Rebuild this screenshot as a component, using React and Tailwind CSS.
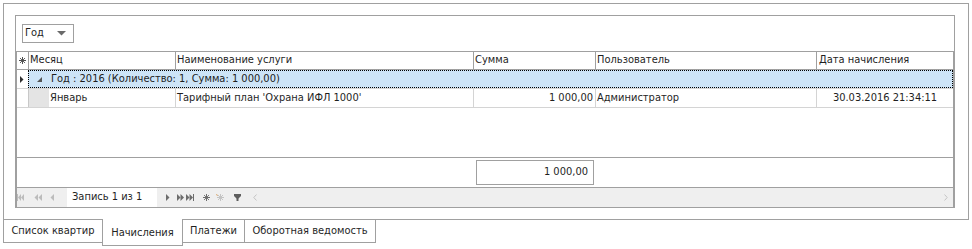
import React from "react";

const FONT = "font-['DejaVu_Sans_Condensed','Liberation_Sans',sans-serif]";

function Star({ color = "#6e6e6e" }) {
  return (
    <svg width="7" height="7" viewBox="0 0 7 7" className="shrink-0">
      <g stroke={color} strokeWidth="1" shapeRendering="crispEdges">
        <line x1="0" y1="3.5" x2="7" y2="3.5" />
        <line x1="3.5" y1="0" x2="3.5" y2="7" />
      </g>
      <g stroke={color} strokeWidth="0.9">
        <line x1="1" y1="1" x2="6" y2="6" />
        <line x1="6" y1="1" x2="1" y2="6" />
      </g>
    </svg>
  );
}

function Nav() {
  const dis = "#bcbcbc";
  const en = "#6c6c6c";
  return (
    <div className="flex h-[20px] items-center bg-[#efefef] border-t border-[#a0a0a0]">
      <svg width="7" height="7" viewBox="0 0 7 7" className="shrink-0">
        <rect x="0" y="0" width="1" height="7" fill={dis} />
        <polygon points="4,0 1,3.5 4,7" fill={dis} />
        <polygon points="7,0 4,3.5 7,7" fill={dis} />
      </svg>
      <svg width="8" height="7" viewBox="0 0 8 7" className="ml-[10px] shrink-0">
        <polygon points="4,0 0.5,3.5 4,7" fill={dis} />
        <polygon points="8,0 4.5,3.5 8,7" fill={dis} />
      </svg>
      <svg width="4" height="7" viewBox="0 0 4 7" className="ml-[8px] shrink-0">
        <polygon points="4,0 0.5,3.5 4,7" fill={dis} />
      </svg>
      <div className="ml-[13px] flex h-full w-[90px] items-center bg-white pl-[5px] text-[11px] text-[#1f1f1f]">
        Запись 1 из 1
      </div>
      <svg width="4" height="7" viewBox="0 0 4 7" className="ml-[9px] shrink-0">
        <polygon points="0,0 3.5,3.5 0,7" fill={en} />
      </svg>
      <svg width="7" height="7" viewBox="0 0 7 7" className="ml-[7px] shrink-0">
        <polygon points="0,0 3.5,3.5 0,7" fill={en} />
        <polygon points="3.5,0 7,3.5 3.5,7" fill={en} />
      </svg>
      <svg width="8" height="7" viewBox="0 0 8 7" className="ml-[2px] shrink-0">
        <polygon points="0,0 3.5,3.5 0,7" fill={en} />
        <polygon points="3.5,0 7,3.5 3.5,7" fill={en} />
        <rect x="7" y="0" width="1" height="7" fill={en} />
      </svg>
      <div className="ml-[9px] flex">
        <Star color={en} />
      </div>
      <div className="ml-[6px] flex">
        <svg width="8" height="7" viewBox="0 0 8 7" className="shrink-0">
          <line x1="0.5" y1="0" x2="1.5" y2="2" stroke="#d9a870" strokeWidth="1" />
          <g stroke="#c4c4c4" strokeWidth="1">
            <line x1="1" y1="3.5" x2="8" y2="3.5" />
            <line x1="4.5" y1="0" x2="4.5" y2="7" />
            <line x1="2" y1="1" x2="7" y2="6" />
            <line x1="7" y1="1" x2="2" y2="6" />
          </g>
        </svg>
      </div>
      <svg width="7" height="7" viewBox="0 0 7 7" className="ml-[10px] shrink-0">
        <rect x="0" y="0" width="7" height="2" fill="#5e5e5e" />
        <polygon points="0,2 7,2 4.5,4.5 2.5,4.5" fill="#5e5e5e" />
        <rect x="2.5" y="4" width="2" height="3" fill="#5e5e5e" />
      </svg>
      <svg width="4" height="7" viewBox="0 0 4 7" className="ml-[12px] shrink-0">
        <polyline points="3.5,0.5 0.8,3.5 3.5,6.5" fill="none" stroke="#c4c4c4" strokeWidth="1" />
      </svg>
      <div className="flex-1" />
      <svg width="4" height="7" viewBox="0 0 4 7" className="mr-[5px] shrink-0">
        <polyline points="0.5,0.5 3.2,3.5 0.5,6.5" fill="none" stroke="#c4c4c4" strokeWidth="1" />
      </svg>
    </div>
  );
}

function Grid() {
  return (
    <div className="flex h-[157px] w-[938px] flex-col border border-[#a0a0a0] bg-white text-[11px] text-[#1f1f1f]">
      {/* header */}
      <div className="flex h-[18px] shrink-0 border-b border-[#a0a0a0]">
        <div className="flex w-[12px] items-center justify-center border-r border-[#a0a0a0] pr-[1px]">
          <Star color="#505050" />
        </div>
        <div className="flex w-[147px] items-center border-r border-[#a0a0a0] pl-[1px]">Месяц</div>
        <div className="flex w-[298px] items-center border-r border-[#a0a0a0] pl-[1px]">Наименование услуги</div>
        <div className="flex w-[122px] items-center border-r border-[#a0a0a0] pl-[1px]">Сумма</div>
        <div className="flex w-[221px] items-center border-r border-[#a0a0a0] pl-[1px]">Пользователь</div>
        <div className="flex w-[136px] items-center pl-[2px]">Дата начисления</div>
      </div>
      {/* group row */}
      <div className="flex h-[19px] shrink-0 border-b border-[#d4d4d4]">
        <div className="flex w-[11px] items-center pl-[3px]">
          <svg width="4" height="7" viewBox="0 0 4 7">
            <polygon points="0,0 3.5,3.5 0,7" fill="#303030" />
          </svg>
        </div>
        <div className="flex flex-1 items-center border border-dotted border-[#000] bg-[#cde4f7]">
          <svg width="5" height="5" viewBox="0 0 5 5" className="ml-[8px] shrink-0">
            <polygon points="5,0 5,5 0,5" fill="#555555" />
          </svg>
          <span className="ml-[9px]">Год : 2016 (Количество: 1, Сумма: 1 000,00)</span>
        </div>
      </div>
      {/* data row */}
      <div className="flex h-[19px] shrink-0 border-b border-[#d4d4d4]">
        <div className="w-[12px] border-r border-[#c8c8c8]" />
        <div className="w-[20px] bg-[#e4e4e4]" />
        <div className="flex w-[127px] items-center border-r border-[#d4d4d4] pl-[1px]">Январь</div>
        <div className="flex w-[298px] items-center border-r border-[#d4d4d4] pl-[1px]">Тарифный план 'Охрана ИФЛ 1000'</div>
        <div className="flex w-[122px] items-center justify-end border-r border-[#d4d4d4] pr-[2px]">1 000,00</div>
        <div className="flex w-[221px] items-center border-r border-[#d4d4d4] pl-[1px]">Администратор</div>
        <div className="flex w-[136px] items-center justify-center">30.03.2016 21:34:11</div>
      </div>
      <div className="flex-1" />
      {/* footer */}
      <div className="flex h-[30px] shrink-0 border-t border-[#a0a0a0]">
        <div className="w-[457px]" />
        <div className="flex w-[122px] items-center px-[2px]">
          <div className="flex h-[25px] w-[118px] items-center justify-end border border-[#a0a0a0] pr-[5px]">1 000,00</div>
        </div>
      </div>
      <Nav />
    </div>
  );
}

export default function App() {
  return (
    <div className={`${FONT} h-[249px] w-[972px] overflow-hidden bg-white text-[11px] text-[#1f1f1f]`}>
      <div className="ml-[3px] mt-[3px] h-[217px] w-[966px] border border-[#a0a0a0] pl-[11px] pt-[11px]">
        <div className="flex h-[193px] w-[940px] flex-col border-l border-r border-t border-[#a0a0a0]">
          <div className="ml-[6px] mt-[8px] flex h-[19px] w-[52px] items-center border border-[#a0a0a0] pl-[2px]">
            <span>Год</span>
            <svg width="9" height="5" viewBox="0 0 9 5" className="ml-[13px]">
              <polygon points="0,0 9,0 4.5,4.5" fill="#6a6a6a" />
            </svg>
          </div>
          <div className="mt-[8px]">
            <Grid />
          </div>
        </div>
      </div>
      <div className="-mt-px ml-[3px] flex items-start">
        <div className="flex h-[24px] w-[100px] items-center justify-center border border-[#a0a0a0]">Список квартир</div>
        <div className="relative -ml-px flex h-[27px] w-[81px] items-center justify-center border-x border-b border-[#a0a0a0] bg-white pt-[2px]">Начисления</div>
        <div className="-ml-px flex h-[24px] w-[63px] items-center justify-center border border-[#a0a0a0]">Платежи</div>
        <div className="-ml-px flex h-[24px] w-[132px] items-center justify-center border border-[#a0a0a0]">Оборотная ведомость</div>
      </div>
    </div>
  );
}
